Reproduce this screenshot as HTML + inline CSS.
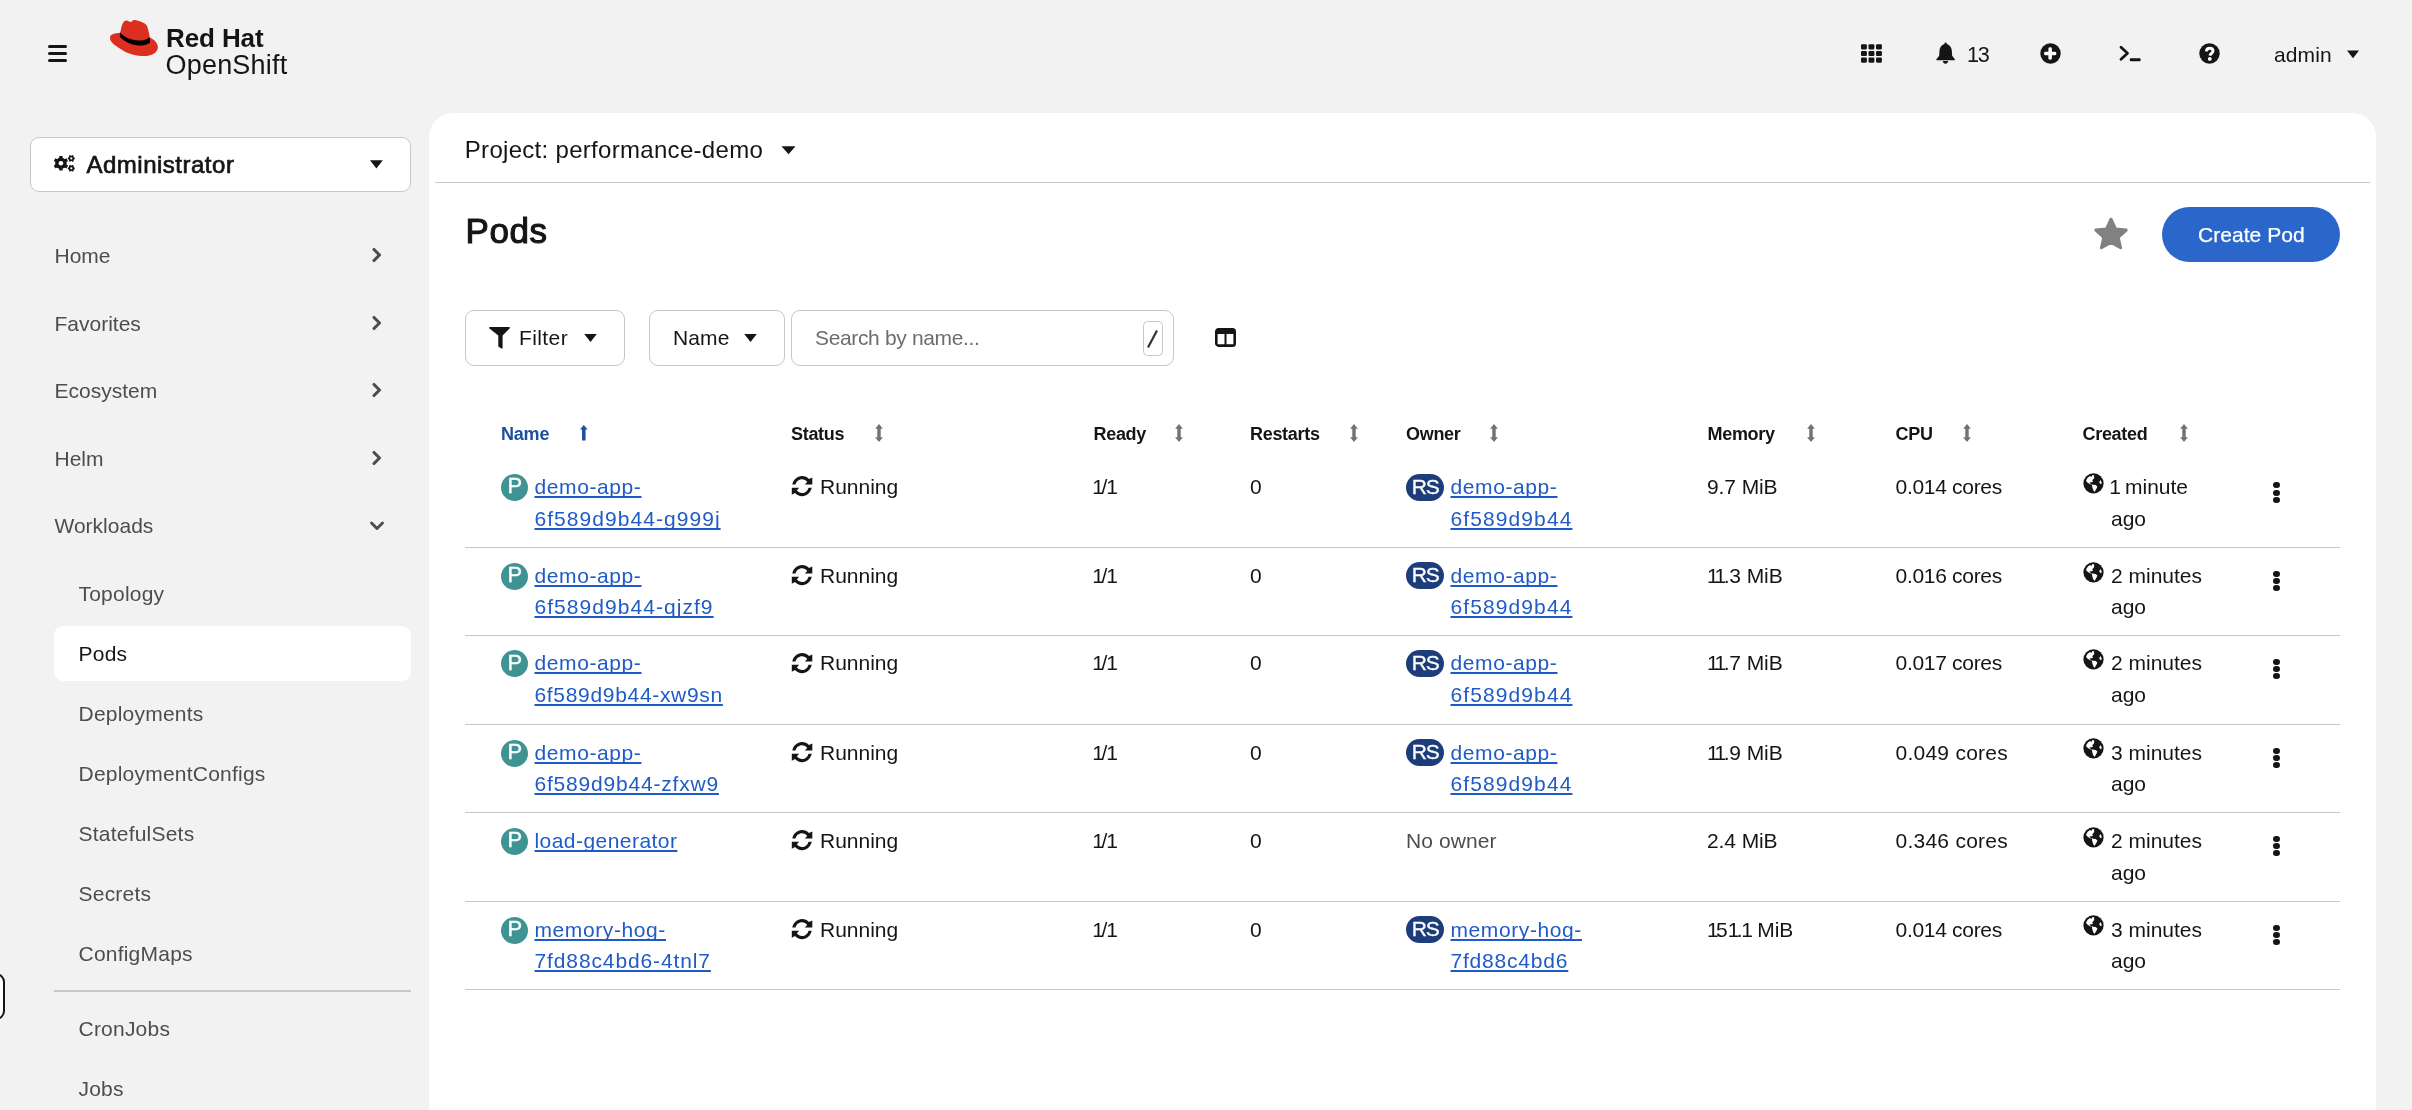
<!DOCTYPE html><html><head><meta charset="utf-8"><style>
html,body{margin:0;padding:0;width:2412px;height:1110px;overflow:hidden;background:#f2f2f2;font-family:"Liberation Sans",sans-serif;}
.t{position:absolute;white-space:nowrap;}
.r{position:absolute;box-sizing:border-box;}
a{color:inherit}
</style></head><body>
<div style="position:absolute;left:0;top:0;width:2412px;height:1110px;overflow:hidden;will-change:transform">
<div class="r" style="left:48.0px;top:45.3px;width:19.0px;height:3.0px;background:#151515;border-radius:1.5px"></div>
<div class="r" style="left:48.0px;top:52.0px;width:19.0px;height:3.0px;background:#151515;border-radius:1.5px"></div>
<div class="r" style="left:48.0px;top:58.7px;width:19.0px;height:3.0px;background:#151515;border-radius:1.5px"></div>
<svg class="r" style="left:105px;top:15px" width="60" height="45" viewBox="0 0 60 45">
<path style="fill:#dc2f1f" d="M15.8,15.4 C16.5,11 17.5,7 20.3,5.7 C22.5,5 24.5,7.2 26.3,6.9 C27.5,5.5 28.5,5 29.5,5.1 C34,5.8 40,8 41.8,10.5 C43,13 44,18 44.8,22.5 C49,24.5 53,28 52.9,32.5 C52.5,38 46,41.5 37,41 C28,40.5 20,37.5 14,33 C8,29 4.5,26 5.1,22.2 C5.5,19 10,18 14.8,18 Z"/>
<path fill="#000" d="M14.9,17.2 C18,21 24,24.5 31,25.2 C36,25.7 41,25.5 44.8,22.2 L45,27.5 C41,30.5 36,31 31.5,30.3 C24,29 18,25.5 14.9,21.8 Z"/>
</svg>
<div class="t" style="left:166.0px;top:25.49px;font-size:26px;line-height:26px;color:#151515;font-weight:700;letter-spacing:-0.1px;">Red Hat</div>
<div class="t" style="left:165.5px;top:51.84px;font-size:27px;line-height:27px;color:#151515;font-weight:400;letter-spacing:0.2px;">OpenShift</div>
<svg class="r" style="left:1858px;top:41px" width="28" height="25" viewBox="0 0 28 25"><rect x="3.0" y="3.200000000000003" width="5.9" height="5.2" rx="1.1" fill="#151515"/><rect x="3.0" y="9.899999999999999" width="5.9" height="5.2" rx="1.1" fill="#151515"/><rect x="3.0" y="16.5" width="5.9" height="5.2" rx="1.1" fill="#151515"/><rect x="10.5" y="3.200000000000003" width="5.9" height="5.2" rx="1.1" fill="#151515"/><rect x="10.5" y="9.899999999999999" width="5.9" height="5.2" rx="1.1" fill="#151515"/><rect x="10.5" y="16.5" width="5.9" height="5.2" rx="1.1" fill="#151515"/><rect x="18.0" y="3.200000000000003" width="5.9" height="5.2" rx="1.1" fill="#151515"/><rect x="18.0" y="9.899999999999999" width="5.9" height="5.2" rx="1.1" fill="#151515"/><rect x="18.0" y="16.5" width="5.9" height="5.2" rx="1.1" fill="#151515"/></svg>
<svg class="r" style="left:1928px;top:38px" width="35" height="30" viewBox="0 0 35 30"><path fill="#151515" d="M17.6,4.4 C18.4,4.4 18.8,5.1 18.8,5.9 C21.8,6.8 23.6,9.4 23.8,12.6 L24.1,17.6 C24.3,18.6 26.2,20.3 26.8,21 C27.1,21.5 26.8,22.3 26.1,22.3 L9.1,22.3 C8.4,22.3 8.1,21.5 8.5,21 C9.1,20.3 11,18.6 11.2,17.6 L11.5,12.6 C11.7,9.4 13.5,6.8 16.4,5.9 C16.4,5.1 16.8,4.4 17.6,4.4 Z M14.7,23.1 L20.3,23.1 C20,24.6 19,25.8 17.5,25.8 C16,25.8 15,24.6 14.7,23.1 Z"/></svg>
<div class="t" style="left:1967.0px;top:44.12px;font-size:21.6px;line-height:21.6px;color:#151515;font-weight:400;letter-spacing:-1.2px;">13</div>
<svg class="r" style="left:2040px;top:43px" width="21" height="21" viewBox="0 0 21 21"><circle cx="10.5" cy="10.5" r="10.2" fill="#151515"/><rect x="8.4" y="4.3" width="3.5" height="12.4" rx="1.4" fill="#fff"/><rect x="4.1" y="8.8" width="12.2" height="3.5" rx="1.4" fill="#fff"/></svg>
<svg class="r" style="left:2118px;top:44px" width="26" height="20" viewBox="0 0 26 20"><path d="M3,3.2 L9.5,9.2 L3,15.2" fill="none" stroke="#151515" stroke-width="2.8" stroke-linecap="round" stroke-linejoin="round"/><rect x="11.8" y="14.3" width="10.8" height="3" rx="1" fill="#151515"/></svg>
<svg class="r" style="left:2199px;top:43px" width="21" height="21" viewBox="0 0 21 21"><circle cx="10.5" cy="10.5" r="10.2" fill="#151515"/><path d="M7.3,8.3 C7.5,6.4 8.9,5.3 10.7,5.3 C12.7,5.3 14,6.5 14,8.1 C14,10.1 11.4,10.5 10.9,12.6" fill="none" stroke="#fff" stroke-width="2.9" stroke-linecap="butt" stroke-linejoin="round"/><circle cx="10.8" cy="15.9" r="1.9" fill="#fff"/></svg>
<div class="t" style="left:2274.0px;top:44.22px;font-size:21px;line-height:21px;color:#151515;font-weight:400;letter-spacing:0.1px;">admin</div>
<svg class="r" style="left:2346px;top:50px" width="14" height="9" viewBox="0 0 14 9"><path d="M1,0.5 L13,0.5 L7,8.3 Z" fill="#151515"/></svg>
<div class="r" style="left:30.0px;top:137.0px;width:381.0px;height:55.0px;background:#fff;border:1.5px solid #c7c7c7;border-radius:9px"></div>
<svg class="r" style="left:50px;top:150px" width="30" height="26" viewBox="0 0 30 26"><circle cx="10.9" cy="13.3" r="5.7" fill="#151515"/><rect x="9.200000000000001" y="6.000000000000001" width="3.4" height="7.3" rx="0.5" fill="#151515" transform="rotate(0 10.9 13.3)"/><rect x="9.200000000000001" y="6.000000000000001" width="3.4" height="7.3" rx="0.5" fill="#151515" transform="rotate(60 10.9 13.3)"/><rect x="9.200000000000001" y="6.000000000000001" width="3.4" height="7.3" rx="0.5" fill="#151515" transform="rotate(120 10.9 13.3)"/><rect x="9.200000000000001" y="6.000000000000001" width="3.4" height="7.3" rx="0.5" fill="#151515" transform="rotate(180 10.9 13.3)"/><rect x="9.200000000000001" y="6.000000000000001" width="3.4" height="7.3" rx="0.5" fill="#151515" transform="rotate(240 10.9 13.3)"/><rect x="9.200000000000001" y="6.000000000000001" width="3.4" height="7.3" rx="0.5" fill="#151515" transform="rotate(300 10.9 13.3)"/><circle cx="10.9" cy="13.3" r="2.3" fill="#fff"/><circle cx="21.3" cy="8.4" r="2.7" fill="#151515"/><rect x="20.400000000000002" y="4.9" width="1.8" height="3.5" rx="0.5" fill="#151515" transform="rotate(30 21.3 8.4)"/><rect x="20.400000000000002" y="4.9" width="1.8" height="3.5" rx="0.5" fill="#151515" transform="rotate(90 21.3 8.4)"/><rect x="20.400000000000002" y="4.9" width="1.8" height="3.5" rx="0.5" fill="#151515" transform="rotate(150 21.3 8.4)"/><rect x="20.400000000000002" y="4.9" width="1.8" height="3.5" rx="0.5" fill="#151515" transform="rotate(210 21.3 8.4)"/><rect x="20.400000000000002" y="4.9" width="1.8" height="3.5" rx="0.5" fill="#151515" transform="rotate(270 21.3 8.4)"/><rect x="20.400000000000002" y="4.9" width="1.8" height="3.5" rx="0.5" fill="#151515" transform="rotate(330 21.3 8.4)"/><circle cx="21.3" cy="8.4" r="1.1" fill="#fff"/><circle cx="21.3" cy="18.3" r="2.7" fill="#151515"/><rect x="20.400000000000002" y="14.8" width="1.8" height="3.5" rx="0.5" fill="#151515" transform="rotate(30 21.3 18.3)"/><rect x="20.400000000000002" y="14.8" width="1.8" height="3.5" rx="0.5" fill="#151515" transform="rotate(90 21.3 18.3)"/><rect x="20.400000000000002" y="14.8" width="1.8" height="3.5" rx="0.5" fill="#151515" transform="rotate(150 21.3 18.3)"/><rect x="20.400000000000002" y="14.8" width="1.8" height="3.5" rx="0.5" fill="#151515" transform="rotate(210 21.3 18.3)"/><rect x="20.400000000000002" y="14.8" width="1.8" height="3.5" rx="0.5" fill="#151515" transform="rotate(270 21.3 18.3)"/><rect x="20.400000000000002" y="14.8" width="1.8" height="3.5" rx="0.5" fill="#151515" transform="rotate(330 21.3 18.3)"/><circle cx="21.3" cy="18.3" r="1.1" fill="#fff"/></svg>
<div class="t" style="left:86.5px;top:152.68px;font-size:24px;line-height:24px;color:#151515;font-weight:400;letter-spacing:0.5px;-webkit-text-stroke:0.7px #151515">Administrator</div>
<svg class="r" style="left:369px;top:159px" width="15" height="11" viewBox="0 0 15 11"><path d="M1,1.2 L13.8,1.2 L7.4,9.5 Z" fill="#151515"/></svg>
<div class="t" style="left:54.5px;top:245.32px;font-size:21px;line-height:21px;color:#4d4d4d;font-weight:400;letter-spacing:0px;">Home</div>
<svg class="r" style="left:370.5px;top:247.00000000000003px" width="12" height="16" viewBox="0 0 12 16"><path d="M3,2.5 L8.5,8 L3,13.5" fill="none" stroke="#4d4d4d" stroke-width="3.1" stroke-linecap="round" stroke-linejoin="round"/></svg>
<div class="t" style="left:54.5px;top:313.42px;font-size:21px;line-height:21px;color:#4d4d4d;font-weight:400;letter-spacing:0px;">Favorites</div>
<svg class="r" style="left:370.5px;top:315.09999999999997px" width="12" height="16" viewBox="0 0 12 16"><path d="M3,2.5 L8.5,8 L3,13.5" fill="none" stroke="#4d4d4d" stroke-width="3.1" stroke-linecap="round" stroke-linejoin="round"/></svg>
<div class="t" style="left:54.5px;top:380.42px;font-size:21px;line-height:21px;color:#4d4d4d;font-weight:400;letter-spacing:0px;">Ecosystem</div>
<svg class="r" style="left:370.5px;top:382.09999999999997px" width="12" height="16" viewBox="0 0 12 16"><path d="M3,2.5 L8.5,8 L3,13.5" fill="none" stroke="#4d4d4d" stroke-width="3.1" stroke-linecap="round" stroke-linejoin="round"/></svg>
<div class="t" style="left:54.5px;top:447.92px;font-size:21px;line-height:21px;color:#4d4d4d;font-weight:400;letter-spacing:0px;">Helm</div>
<svg class="r" style="left:370.5px;top:449.59999999999997px" width="12" height="16" viewBox="0 0 12 16"><path d="M3,2.5 L8.5,8 L3,13.5" fill="none" stroke="#4d4d4d" stroke-width="3.1" stroke-linecap="round" stroke-linejoin="round"/></svg>
<div class="t" style="left:54.5px;top:514.82px;font-size:21px;line-height:21px;color:#4d4d4d;font-weight:400;letter-spacing:0px;">Workloads</div>
<svg class="r" style="left:368.5px;top:519.8px" width="16" height="12" viewBox="0 0 16 12"><path d="M2.5,3 L8,8.5 L13.5,3" fill="none" stroke="#4d4d4d" stroke-width="2.9" stroke-linecap="round" stroke-linejoin="round"/></svg>
<div class="r" style="left:54.0px;top:626.0px;width:357.0px;height:55.0px;background:#fff;border-radius:9px"></div>
<div class="t" style="left:78.5px;top:582.62px;font-size:21px;line-height:21px;color:#4d4d4d;font-weight:400;letter-spacing:0.22px;">Topology</div>
<div class="t" style="left:78.5px;top:642.72px;font-size:21px;line-height:21px;color:#151515;font-weight:400;letter-spacing:0.22px;">Pods</div>
<div class="t" style="left:78.5px;top:703.22px;font-size:21px;line-height:21px;color:#4d4d4d;font-weight:400;letter-spacing:0.22px;">Deployments</div>
<div class="t" style="left:78.5px;top:763.02px;font-size:21px;line-height:21px;color:#4d4d4d;font-weight:400;letter-spacing:0.22px;">DeploymentConfigs</div>
<div class="t" style="left:78.5px;top:822.82px;font-size:21px;line-height:21px;color:#4d4d4d;font-weight:400;letter-spacing:0.22px;">StatefulSets</div>
<div class="t" style="left:78.5px;top:883.02px;font-size:21px;line-height:21px;color:#4d4d4d;font-weight:400;letter-spacing:0.22px;">Secrets</div>
<div class="t" style="left:78.5px;top:943.22px;font-size:21px;line-height:21px;color:#4d4d4d;font-weight:400;letter-spacing:0.22px;">ConfigMaps</div>
<div class="t" style="left:78.5px;top:1017.82px;font-size:21px;line-height:21px;color:#4d4d4d;font-weight:400;letter-spacing:0.22px;">CronJobs</div>
<div class="t" style="left:78.5px;top:1077.92px;font-size:21px;line-height:21px;color:#4d4d4d;font-weight:400;letter-spacing:0.22px;">Jobs</div>
<div class="r" style="left:54.0px;top:990.0px;width:357.0px;height:2.0px;background:#c7c7c7"></div>
<div class="r" style="left:-30.0px;top:972.5px;width:34.5px;height:47.5px;background:#fff;border:2px solid #151515;border-radius:9px"></div>
<div class="r" style="left:429.0px;top:113.0px;width:1947.0px;height:1100.0px;background:#fff;border-radius:24px 24px 0 0"></div>
<div class="t" style="left:464.8px;top:137.58px;font-size:24px;line-height:24px;color:#151515;font-weight:400;letter-spacing:0.3px;">Project: performance-demo</div>
<svg class="r" style="left:780px;top:145px" width="17" height="11" viewBox="0 0 17 11"><path d="M1.5,1.2 L15.5,1.2 L8.5,9.2 Z" fill="#151515"/></svg>
<div class="r" style="left:435.0px;top:182.0px;width:1935.0px;height:1.0px;background:#c8c8c8"></div>
<div class="t" style="left:465.5px;top:212.97px;font-size:35px;line-height:35px;color:#151515;font-weight:400;letter-spacing:0.6px;-webkit-text-stroke:1.1px #151515">Pods</div>
<svg class="r" style="left:2092px;top:216px" width="38" height="36" viewBox="0 0 38 36"><path fill="#818181" d="M19,3.2 L23.5,12.9 L34.2,14.1 L26.2,21.3 L28.6,31.8 L19,26.4 L9.4,31.8 L11.8,21.3 L3.8,14.1 L14.5,12.9 Z" stroke="#818181" stroke-width="3" stroke-linejoin="round"/></svg>
<div class="r" style="left:2162.0px;top:207.0px;width:178.0px;height:55.0px;background:#2b66ca;border-radius:28px"></div>
<div class="t" style="left:2198.0px;top:224.02px;font-size:21px;line-height:21px;color:#fff;font-weight:400;letter-spacing:0.05px;-webkit-text-stroke:0.25px #fff">Create Pod</div>
<div class="r" style="left:465.0px;top:310.0px;width:160.0px;height:56.0px;background:#fff;border:1.5px solid #c7c7c7;border-radius:9px"></div>
<svg class="r" style="left:487px;top:326px" width="25" height="23" viewBox="0 0 25 23"><path fill="#151515" d="M2.2,2.2 C2,1.6 2.4,1 3,1 L22.2,1 C22.8,1 23.1,1.6 22.8,2.2 L15.6,9.6 L15.6,22 C15.6,22.6 15,22.9 14.5,22.6 L11.9,20.9 C11.5,20.7 11.3,20.3 11.3,19.9 L11.3,9.6 Z"/></svg>
<div class="t" style="left:519.0px;top:327.22px;font-size:21px;line-height:21px;color:#151515;font-weight:400;letter-spacing:0.4px;">Filter</div>
<svg class="r" style="left:583px;top:333px" width="15" height="10" viewBox="0 0 15 10"><path d="M1.2,1 L13.8,1 L7.5,9 Z" fill="#151515"/></svg>
<div class="r" style="left:649.0px;top:310.0px;width:136.0px;height:56.0px;background:#fff;border:1.5px solid #c7c7c7;border-radius:9px"></div>
<div class="t" style="left:673.0px;top:327.22px;font-size:21px;line-height:21px;color:#151515;font-weight:400;letter-spacing:0.1px;">Name</div>
<svg class="r" style="left:742.5px;top:333px" width="15" height="10" viewBox="0 0 15 10"><path d="M1.2,1 L13.8,1 L7.5,9 Z" fill="#151515"/></svg>
<div class="r" style="left:791.0px;top:310.0px;width:383.0px;height:56.0px;background:#fff;border:1.5px solid #c7c7c7;border-radius:9px"></div>
<div class="t" style="left:815.0px;top:327.22px;font-size:21px;line-height:21px;color:#6a6e73;font-weight:400;letter-spacing:-0.35px;">Search by name...</div>
<div class="r" style="left:1143.0px;top:321.0px;width:20.0px;height:35.0px;background:#fff;border:1.2px solid #c7c7c7;border-radius:4.5px"></div>
<svg class="r" style="left:1143px;top:321px" width="20" height="35" viewBox="0 0 20 35"><path d="M5,26.5 L14,9.5" stroke="#333" stroke-width="2.2"/></svg>
<svg class="r" style="left:1214px;top:327px" width="23" height="21" viewBox="0 0 23 21"><rect x="2.3" y="2.3" width="18.4" height="16.3" rx="2.2" fill="none" stroke="#151515" stroke-width="2.6"/><rect x="2" y="2" width="19" height="5" fill="#151515"/><rect x="10.5" y="5" width="2" height="13" fill="#151515"/></svg>
<div class="t" style="left:501.0px;top:425.16px;font-size:18px;line-height:18px;color:#1f4f9a;font-weight:700;letter-spacing:-0.2px;">Name</div>
<svg class="r" style="left:578px;top:423px" width="12" height="20" viewBox="0 0 12 20"><path fill="#1f4f9a" d="M5.8,2 L9.6,6.6 L7.55,6.6 L7.55,17.6 L4.05,17.6 L4.05,6.6 L2,6.6 Z"/></svg>
<div class="t" style="left:791.0px;top:425.16px;font-size:18px;line-height:18px;color:#151515;font-weight:700;letter-spacing:-0.3px;">Status</div>
<svg class="r" style="left:874px;top:423px" width="11" height="20" viewBox="0 0 11 20"><path fill="#727272" d="M5,1 L8.9,5.8 L6.7,5.8 L6.7,14.2 L8.9,14.2 L5,19 L1.1,14.2 L3.3,14.2 L3.3,5.8 L1.1,5.8 Z"/></svg>
<div class="t" style="left:1093.5px;top:425.16px;font-size:18px;line-height:18px;color:#151515;font-weight:700;letter-spacing:-0.3px;">Ready</div>
<svg class="r" style="left:1173.5px;top:423px" width="11" height="20" viewBox="0 0 11 20"><path fill="#727272" d="M5,1 L8.9,5.8 L6.7,5.8 L6.7,14.2 L8.9,14.2 L5,19 L1.1,14.2 L3.3,14.2 L3.3,5.8 L1.1,5.8 Z"/></svg>
<div class="t" style="left:1250.0px;top:425.16px;font-size:18px;line-height:18px;color:#151515;font-weight:700;letter-spacing:-0.3px;">Restarts</div>
<svg class="r" style="left:1348.5px;top:423px" width="11" height="20" viewBox="0 0 11 20"><path fill="#727272" d="M5,1 L8.9,5.8 L6.7,5.8 L6.7,14.2 L8.9,14.2 L5,19 L1.1,14.2 L3.3,14.2 L3.3,5.8 L1.1,5.8 Z"/></svg>
<div class="t" style="left:1406.0px;top:425.16px;font-size:18px;line-height:18px;color:#151515;font-weight:700;letter-spacing:-0.3px;">Owner</div>
<svg class="r" style="left:1488.5px;top:423px" width="11" height="20" viewBox="0 0 11 20"><path fill="#727272" d="M5,1 L8.9,5.8 L6.7,5.8 L6.7,14.2 L8.9,14.2 L5,19 L1.1,14.2 L3.3,14.2 L3.3,5.8 L1.1,5.8 Z"/></svg>
<div class="t" style="left:1707.5px;top:425.16px;font-size:18px;line-height:18px;color:#151515;font-weight:700;letter-spacing:-0.3px;">Memory</div>
<svg class="r" style="left:1805.7px;top:423px" width="11" height="20" viewBox="0 0 11 20"><path fill="#727272" d="M5,1 L8.9,5.8 L6.7,5.8 L6.7,14.2 L8.9,14.2 L5,19 L1.1,14.2 L3.3,14.2 L3.3,5.8 L1.1,5.8 Z"/></svg>
<div class="t" style="left:1895.5px;top:425.16px;font-size:18px;line-height:18px;color:#151515;font-weight:700;letter-spacing:-0.3px;">CPU</div>
<svg class="r" style="left:1961.8px;top:423px" width="11" height="20" viewBox="0 0 11 20"><path fill="#727272" d="M5,1 L8.9,5.8 L6.7,5.8 L6.7,14.2 L8.9,14.2 L5,19 L1.1,14.2 L3.3,14.2 L3.3,5.8 L1.1,5.8 Z"/></svg>
<div class="t" style="left:2082.5px;top:425.16px;font-size:18px;line-height:18px;color:#151515;font-weight:700;letter-spacing:-0.3px;">Created</div>
<svg class="r" style="left:2178.5px;top:423px" width="11" height="20" viewBox="0 0 11 20"><path fill="#727272" d="M5,1 L8.9,5.8 L6.7,5.8 L6.7,14.2 L8.9,14.2 L5,19 L1.1,14.2 L3.3,14.2 L3.3,5.8 L1.1,5.8 Z"/></svg>
<svg class="r" style="left:500px;top:473.1px" width="29" height="29" viewBox="0 0 29 29"><circle cx="14.5" cy="14.5" r="13.5" fill="#409393"/></svg>
<div class="t" style="left:507.6px;top:475.38px;font-size:22px;line-height:22px;color:#fff;font-weight:400;letter-spacing:0px;-webkit-text-stroke:0.35px #fff">P</div>
<div class="t" style="left:534.5px;top:476.12px;font-size:21px;line-height:21px;color:#1f5bc6;font-weight:400;letter-spacing:0.6px;text-decoration:underline;text-decoration-thickness:2px;text-underline-offset:2.1px;text-decoration-skip-ink:none">demo-app-</div>
<div class="t" style="left:534.5px;top:507.92px;font-size:21px;line-height:21px;color:#1f5bc6;font-weight:400;letter-spacing:1.05px;text-decoration:underline;text-decoration-thickness:2px;text-underline-offset:2.1px;text-decoration-skip-ink:none">6f589d9b44-g999j</div>
<svg class="r" style="left:790.5px;top:475.3px" width="22" height="22" viewBox="0 0 22 22"><g fill="#151515">
<path d="M1.3,9.5 C2.2,4.6 6.2,1 11,1 C13.8,1 16.3,2.2 18,4.1 L21.3,2.4 L21.3,9.4 L13.8,9.4 L16.2,6.9 C14.9,5.3 13,4.2 11,4.2 C7.8,4.2 5.2,6.5 4.5,9.5 Z"/>
<path d="M20.7,12.7 C19.8,17.5 15.8,21.2 11,21.2 C8.3,21.2 5.7,20 4,18.1 L0.8,19.8 L0.8,12.7 L8.2,12.7 L5.9,15.3 C7.2,17 9,18 11,18 C14.2,18 16.8,15.8 17.5,12.7 Z"/>
</g></svg>
<div class="t" style="left:820.0px;top:476.12px;font-size:21px;line-height:21px;color:#151515;font-weight:400;letter-spacing:0px;">Running</div>
<div class="t" style="left:1092.3px;top:476.12px;font-size:21px;line-height:21px;color:#151515;font-weight:400;letter-spacing:0px;"><span style="letter-spacing:-2.4px">1</span>/<span style="margin-left:-1.2px;letter-spacing:-1.2px">1</span></div>
<div class="t" style="left:1250.0px;top:476.12px;font-size:21px;line-height:21px;color:#151515;font-weight:400;letter-spacing:0px;">0</div>
<div class="r" style="left:1406.0px;top:473.9px;width:38.0px;height:27.0px;background:#1c3d7a;border-radius:14px"></div>
<div class="t" style="left:1411.8px;top:475.92px;font-size:21px;line-height:21px;color:#fff;font-weight:400;letter-spacing:-1.1px;-webkit-text-stroke:0.3px #fff">RS</div>
<div class="t" style="left:1450.5px;top:476.12px;font-size:21px;line-height:21px;color:#1f5bc6;font-weight:400;letter-spacing:0.6px;text-decoration:underline;text-decoration-thickness:2px;text-underline-offset:2.1px;text-decoration-skip-ink:none">demo-app-</div>
<div class="t" style="left:1450.5px;top:507.92px;font-size:21px;line-height:21px;color:#1f5bc6;font-weight:400;letter-spacing:1.1px;text-decoration:underline;text-decoration-thickness:2px;text-underline-offset:2.1px;text-decoration-skip-ink:none">6f589d9b44</div>
<div class="t" style="left:1707.0px;top:476.12px;font-size:21px;line-height:21px;color:#151515;font-weight:400;letter-spacing:-0.1px;">9.7 MiB</div>
<div class="t" style="left:1895.5px;top:476.12px;font-size:21px;line-height:21px;color:#151515;font-weight:400;letter-spacing:-0.3px;">0.014 cores</div>
<svg class="r" style="left:2080px;top:470.0px" width="28" height="28" viewBox="0 0 28 28"><circle cx="13.5" cy="13.4" r="10.1" fill="#151515"/>
<path fill="#fff" d="M6,10.8 C6.8,8.6 8.5,6.8 10.2,6.0 L11.2,6.9 L12.6,5.0 C13.3,5.0 14,5.4 14.2,5.9 L14.1,8.3 L12.3,10.2 L12.9,11.9 L11.1,12.3 L9.6,12.5 L9.8,13.3 L11.8,14.4 L11.2,14.8 L8.3,13.2 C7.2,12.6 6.4,11.8 6,10.8 Z"/>
<path fill="#fff" d="M11.9,14.6 L15.6,15.0 L17.4,16.4 L16.4,18.7 L14.6,21.9 L13.1,19.9 L12.1,16.6 Z"/>
<path fill="#fff" d="M19.2,12.1 L20.7,10.1 L21.4,12.1 L21.9,13.6 L20.2,14.1 Z"/></svg>
<div class="t" style="left:2111.0px;top:476.12px;font-size:21px;line-height:21px;color:#151515;font-weight:400;letter-spacing:0px;"><span style="margin-left:-1.75px;letter-spacing:-1.75px">1</span> minute</div>
<div class="t" style="left:2111.0px;top:507.92px;font-size:21px;line-height:21px;color:#151515;font-weight:400;letter-spacing:0px;">ago</div>
<div class="r" style="left:2273.4px;top:482.2px;width:6.4px;height:6.2px;background:#151515;border-radius:50%"></div>
<div class="r" style="left:2273.4px;top:489.5px;width:6.4px;height:6.2px;background:#151515;border-radius:50%"></div>
<div class="r" style="left:2273.4px;top:496.6px;width:6.4px;height:6.2px;background:#151515;border-radius:50%"></div>
<svg class="r" style="left:500px;top:561.6px" width="29" height="29" viewBox="0 0 29 29"><circle cx="14.5" cy="14.5" r="13.5" fill="#409393"/></svg>
<div class="t" style="left:507.6px;top:563.88px;font-size:22px;line-height:22px;color:#fff;font-weight:400;letter-spacing:0px;-webkit-text-stroke:0.35px #fff">P</div>
<div class="t" style="left:534.5px;top:564.62px;font-size:21px;line-height:21px;color:#1f5bc6;font-weight:400;letter-spacing:0.6px;text-decoration:underline;text-decoration-thickness:2px;text-underline-offset:2.1px;text-decoration-skip-ink:none">demo-app-</div>
<div class="t" style="left:534.5px;top:596.42px;font-size:21px;line-height:21px;color:#1f5bc6;font-weight:400;letter-spacing:1.05px;text-decoration:underline;text-decoration-thickness:2px;text-underline-offset:2.1px;text-decoration-skip-ink:none">6f589d9b44-qjzf9</div>
<svg class="r" style="left:790.5px;top:563.8000000000001px" width="22" height="22" viewBox="0 0 22 22"><g fill="#151515">
<path d="M1.3,9.5 C2.2,4.6 6.2,1 11,1 C13.8,1 16.3,2.2 18,4.1 L21.3,2.4 L21.3,9.4 L13.8,9.4 L16.2,6.9 C14.9,5.3 13,4.2 11,4.2 C7.8,4.2 5.2,6.5 4.5,9.5 Z"/>
<path d="M20.7,12.7 C19.8,17.5 15.8,21.2 11,21.2 C8.3,21.2 5.7,20 4,18.1 L0.8,19.8 L0.8,12.7 L8.2,12.7 L5.9,15.3 C7.2,17 9,18 11,18 C14.2,18 16.8,15.8 17.5,12.7 Z"/>
</g></svg>
<div class="t" style="left:820.0px;top:564.62px;font-size:21px;line-height:21px;color:#151515;font-weight:400;letter-spacing:0px;">Running</div>
<div class="t" style="left:1092.3px;top:564.62px;font-size:21px;line-height:21px;color:#151515;font-weight:400;letter-spacing:0px;"><span style="letter-spacing:-2.4px">1</span>/<span style="margin-left:-1.2px;letter-spacing:-1.2px">1</span></div>
<div class="t" style="left:1250.0px;top:564.62px;font-size:21px;line-height:21px;color:#151515;font-weight:400;letter-spacing:0px;">0</div>
<div class="r" style="left:1406.0px;top:562.4px;width:38.0px;height:27.0px;background:#1c3d7a;border-radius:14px"></div>
<div class="t" style="left:1411.8px;top:564.42px;font-size:21px;line-height:21px;color:#fff;font-weight:400;letter-spacing:-1.1px;-webkit-text-stroke:0.3px #fff">RS</div>
<div class="t" style="left:1450.5px;top:564.62px;font-size:21px;line-height:21px;color:#1f5bc6;font-weight:400;letter-spacing:0.6px;text-decoration:underline;text-decoration-thickness:2px;text-underline-offset:2.1px;text-decoration-skip-ink:none">demo-app-</div>
<div class="t" style="left:1450.5px;top:596.42px;font-size:21px;line-height:21px;color:#1f5bc6;font-weight:400;letter-spacing:1.1px;text-decoration:underline;text-decoration-thickness:2px;text-underline-offset:2.1px;text-decoration-skip-ink:none">6f589d9b44</div>
<div class="t" style="left:1707.0px;top:564.62px;font-size:21px;line-height:21px;color:#151515;font-weight:400;letter-spacing:-0.1px;"><span style="letter-spacing:-2.6px">1</span><span style="letter-spacing:-2.6px">1</span>.3 MiB</div>
<div class="t" style="left:1895.5px;top:564.62px;font-size:21px;line-height:21px;color:#151515;font-weight:400;letter-spacing:-0.3px;">0.016 cores</div>
<svg class="r" style="left:2080px;top:558.5px" width="28" height="28" viewBox="0 0 28 28"><circle cx="13.5" cy="13.4" r="10.1" fill="#151515"/>
<path fill="#fff" d="M6,10.8 C6.8,8.6 8.5,6.8 10.2,6.0 L11.2,6.9 L12.6,5.0 C13.3,5.0 14,5.4 14.2,5.9 L14.1,8.3 L12.3,10.2 L12.9,11.9 L11.1,12.3 L9.6,12.5 L9.8,13.3 L11.8,14.4 L11.2,14.8 L8.3,13.2 C7.2,12.6 6.4,11.8 6,10.8 Z"/>
<path fill="#fff" d="M11.9,14.6 L15.6,15.0 L17.4,16.4 L16.4,18.7 L14.6,21.9 L13.1,19.9 L12.1,16.6 Z"/>
<path fill="#fff" d="M19.2,12.1 L20.7,10.1 L21.4,12.1 L21.9,13.6 L20.2,14.1 Z"/></svg>
<div class="t" style="left:2111.0px;top:564.62px;font-size:21px;line-height:21px;color:#151515;font-weight:400;letter-spacing:0px;">2 minutes</div>
<div class="t" style="left:2111.0px;top:596.42px;font-size:21px;line-height:21px;color:#151515;font-weight:400;letter-spacing:0px;">ago</div>
<div class="r" style="left:2273.4px;top:570.7px;width:6.4px;height:6.2px;background:#151515;border-radius:50%"></div>
<div class="r" style="left:2273.4px;top:578.0px;width:6.4px;height:6.2px;background:#151515;border-radius:50%"></div>
<div class="r" style="left:2273.4px;top:585.1px;width:6.4px;height:6.2px;background:#151515;border-radius:50%"></div>
<svg class="r" style="left:500px;top:649.4px" width="29" height="29" viewBox="0 0 29 29"><circle cx="14.5" cy="14.5" r="13.5" fill="#409393"/></svg>
<div class="t" style="left:507.6px;top:651.68px;font-size:22px;line-height:22px;color:#fff;font-weight:400;letter-spacing:0px;-webkit-text-stroke:0.35px #fff">P</div>
<div class="t" style="left:534.5px;top:652.42px;font-size:21px;line-height:21px;color:#1f5bc6;font-weight:400;letter-spacing:0.6px;text-decoration:underline;text-decoration-thickness:2px;text-underline-offset:2.1px;text-decoration-skip-ink:none">demo-app-</div>
<div class="t" style="left:534.5px;top:684.22px;font-size:21px;line-height:21px;color:#1f5bc6;font-weight:400;letter-spacing:0.68px;text-decoration:underline;text-decoration-thickness:2px;text-underline-offset:2.1px;text-decoration-skip-ink:none">6f589d9b44-xw9sn</div>
<svg class="r" style="left:790.5px;top:651.6px" width="22" height="22" viewBox="0 0 22 22"><g fill="#151515">
<path d="M1.3,9.5 C2.2,4.6 6.2,1 11,1 C13.8,1 16.3,2.2 18,4.1 L21.3,2.4 L21.3,9.4 L13.8,9.4 L16.2,6.9 C14.9,5.3 13,4.2 11,4.2 C7.8,4.2 5.2,6.5 4.5,9.5 Z"/>
<path d="M20.7,12.7 C19.8,17.5 15.8,21.2 11,21.2 C8.3,21.2 5.7,20 4,18.1 L0.8,19.8 L0.8,12.7 L8.2,12.7 L5.9,15.3 C7.2,17 9,18 11,18 C14.2,18 16.8,15.8 17.5,12.7 Z"/>
</g></svg>
<div class="t" style="left:820.0px;top:652.42px;font-size:21px;line-height:21px;color:#151515;font-weight:400;letter-spacing:0px;">Running</div>
<div class="t" style="left:1092.3px;top:652.42px;font-size:21px;line-height:21px;color:#151515;font-weight:400;letter-spacing:0px;"><span style="letter-spacing:-2.4px">1</span>/<span style="margin-left:-1.2px;letter-spacing:-1.2px">1</span></div>
<div class="t" style="left:1250.0px;top:652.42px;font-size:21px;line-height:21px;color:#151515;font-weight:400;letter-spacing:0px;">0</div>
<div class="r" style="left:1406.0px;top:650.2px;width:38.0px;height:27.0px;background:#1c3d7a;border-radius:14px"></div>
<div class="t" style="left:1411.8px;top:652.22px;font-size:21px;line-height:21px;color:#fff;font-weight:400;letter-spacing:-1.1px;-webkit-text-stroke:0.3px #fff">RS</div>
<div class="t" style="left:1450.5px;top:652.42px;font-size:21px;line-height:21px;color:#1f5bc6;font-weight:400;letter-spacing:0.6px;text-decoration:underline;text-decoration-thickness:2px;text-underline-offset:2.1px;text-decoration-skip-ink:none">demo-app-</div>
<div class="t" style="left:1450.5px;top:684.22px;font-size:21px;line-height:21px;color:#1f5bc6;font-weight:400;letter-spacing:1.1px;text-decoration:underline;text-decoration-thickness:2px;text-underline-offset:2.1px;text-decoration-skip-ink:none">6f589d9b44</div>
<div class="t" style="left:1707.0px;top:652.42px;font-size:21px;line-height:21px;color:#151515;font-weight:400;letter-spacing:-0.1px;"><span style="letter-spacing:-2.6px">1</span><span style="letter-spacing:-2.6px">1</span>.7 MiB</div>
<div class="t" style="left:1895.5px;top:652.42px;font-size:21px;line-height:21px;color:#151515;font-weight:400;letter-spacing:-0.3px;">0.017 cores</div>
<svg class="r" style="left:2080px;top:646.3px" width="28" height="28" viewBox="0 0 28 28"><circle cx="13.5" cy="13.4" r="10.1" fill="#151515"/>
<path fill="#fff" d="M6,10.8 C6.8,8.6 8.5,6.8 10.2,6.0 L11.2,6.9 L12.6,5.0 C13.3,5.0 14,5.4 14.2,5.9 L14.1,8.3 L12.3,10.2 L12.9,11.9 L11.1,12.3 L9.6,12.5 L9.8,13.3 L11.8,14.4 L11.2,14.8 L8.3,13.2 C7.2,12.6 6.4,11.8 6,10.8 Z"/>
<path fill="#fff" d="M11.9,14.6 L15.6,15.0 L17.4,16.4 L16.4,18.7 L14.6,21.9 L13.1,19.9 L12.1,16.6 Z"/>
<path fill="#fff" d="M19.2,12.1 L20.7,10.1 L21.4,12.1 L21.9,13.6 L20.2,14.1 Z"/></svg>
<div class="t" style="left:2111.0px;top:652.42px;font-size:21px;line-height:21px;color:#151515;font-weight:400;letter-spacing:0px;">2 minutes</div>
<div class="t" style="left:2111.0px;top:684.22px;font-size:21px;line-height:21px;color:#151515;font-weight:400;letter-spacing:0px;">ago</div>
<div class="r" style="left:2273.4px;top:658.5px;width:6.4px;height:6.2px;background:#151515;border-radius:50%"></div>
<div class="r" style="left:2273.4px;top:665.8px;width:6.4px;height:6.2px;background:#151515;border-radius:50%"></div>
<div class="r" style="left:2273.4px;top:672.9px;width:6.4px;height:6.2px;background:#151515;border-radius:50%"></div>
<svg class="r" style="left:500px;top:738.5px" width="29" height="29" viewBox="0 0 29 29"><circle cx="14.5" cy="14.5" r="13.5" fill="#409393"/></svg>
<div class="t" style="left:507.6px;top:740.78px;font-size:22px;line-height:22px;color:#fff;font-weight:400;letter-spacing:0px;-webkit-text-stroke:0.35px #fff">P</div>
<div class="t" style="left:534.5px;top:741.52px;font-size:21px;line-height:21px;color:#1f5bc6;font-weight:400;letter-spacing:0.6px;text-decoration:underline;text-decoration-thickness:2px;text-underline-offset:2.1px;text-decoration-skip-ink:none">demo-app-</div>
<div class="t" style="left:534.5px;top:773.32px;font-size:21px;line-height:21px;color:#1f5bc6;font-weight:400;letter-spacing:0.8px;text-decoration:underline;text-decoration-thickness:2px;text-underline-offset:2.1px;text-decoration-skip-ink:none">6f589d9b44-zfxw9</div>
<svg class="r" style="left:790.5px;top:740.7px" width="22" height="22" viewBox="0 0 22 22"><g fill="#151515">
<path d="M1.3,9.5 C2.2,4.6 6.2,1 11,1 C13.8,1 16.3,2.2 18,4.1 L21.3,2.4 L21.3,9.4 L13.8,9.4 L16.2,6.9 C14.9,5.3 13,4.2 11,4.2 C7.8,4.2 5.2,6.5 4.5,9.5 Z"/>
<path d="M20.7,12.7 C19.8,17.5 15.8,21.2 11,21.2 C8.3,21.2 5.7,20 4,18.1 L0.8,19.8 L0.8,12.7 L8.2,12.7 L5.9,15.3 C7.2,17 9,18 11,18 C14.2,18 16.8,15.8 17.5,12.7 Z"/>
</g></svg>
<div class="t" style="left:820.0px;top:741.52px;font-size:21px;line-height:21px;color:#151515;font-weight:400;letter-spacing:0px;">Running</div>
<div class="t" style="left:1092.3px;top:741.52px;font-size:21px;line-height:21px;color:#151515;font-weight:400;letter-spacing:0px;"><span style="letter-spacing:-2.4px">1</span>/<span style="margin-left:-1.2px;letter-spacing:-1.2px">1</span></div>
<div class="t" style="left:1250.0px;top:741.52px;font-size:21px;line-height:21px;color:#151515;font-weight:400;letter-spacing:0px;">0</div>
<div class="r" style="left:1406.0px;top:739.3px;width:38.0px;height:27.0px;background:#1c3d7a;border-radius:14px"></div>
<div class="t" style="left:1411.8px;top:741.32px;font-size:21px;line-height:21px;color:#fff;font-weight:400;letter-spacing:-1.1px;-webkit-text-stroke:0.3px #fff">RS</div>
<div class="t" style="left:1450.5px;top:741.52px;font-size:21px;line-height:21px;color:#1f5bc6;font-weight:400;letter-spacing:0.6px;text-decoration:underline;text-decoration-thickness:2px;text-underline-offset:2.1px;text-decoration-skip-ink:none">demo-app-</div>
<div class="t" style="left:1450.5px;top:773.32px;font-size:21px;line-height:21px;color:#1f5bc6;font-weight:400;letter-spacing:1.1px;text-decoration:underline;text-decoration-thickness:2px;text-underline-offset:2.1px;text-decoration-skip-ink:none">6f589d9b44</div>
<div class="t" style="left:1707.0px;top:741.52px;font-size:21px;line-height:21px;color:#151515;font-weight:400;letter-spacing:-0.1px;"><span style="letter-spacing:-2.6px">1</span><span style="letter-spacing:-2.6px">1</span>.9 MiB</div>
<div class="t" style="left:1895.5px;top:741.52px;font-size:21px;line-height:21px;color:#151515;font-weight:400;letter-spacing:0.25px;">0.049 cores</div>
<svg class="r" style="left:2080px;top:735.4px" width="28" height="28" viewBox="0 0 28 28"><circle cx="13.5" cy="13.4" r="10.1" fill="#151515"/>
<path fill="#fff" d="M6,10.8 C6.8,8.6 8.5,6.8 10.2,6.0 L11.2,6.9 L12.6,5.0 C13.3,5.0 14,5.4 14.2,5.9 L14.1,8.3 L12.3,10.2 L12.9,11.9 L11.1,12.3 L9.6,12.5 L9.8,13.3 L11.8,14.4 L11.2,14.8 L8.3,13.2 C7.2,12.6 6.4,11.8 6,10.8 Z"/>
<path fill="#fff" d="M11.9,14.6 L15.6,15.0 L17.4,16.4 L16.4,18.7 L14.6,21.9 L13.1,19.9 L12.1,16.6 Z"/>
<path fill="#fff" d="M19.2,12.1 L20.7,10.1 L21.4,12.1 L21.9,13.6 L20.2,14.1 Z"/></svg>
<div class="t" style="left:2111.0px;top:741.52px;font-size:21px;line-height:21px;color:#151515;font-weight:400;letter-spacing:0px;">3 minutes</div>
<div class="t" style="left:2111.0px;top:773.32px;font-size:21px;line-height:21px;color:#151515;font-weight:400;letter-spacing:0px;">ago</div>
<div class="r" style="left:2273.4px;top:747.6px;width:6.4px;height:6.2px;background:#151515;border-radius:50%"></div>
<div class="r" style="left:2273.4px;top:754.9px;width:6.4px;height:6.2px;background:#151515;border-radius:50%"></div>
<div class="r" style="left:2273.4px;top:762.0px;width:6.4px;height:6.2px;background:#151515;border-radius:50%"></div>
<svg class="r" style="left:500px;top:826.8px" width="29" height="29" viewBox="0 0 29 29"><circle cx="14.5" cy="14.5" r="13.5" fill="#409393"/></svg>
<div class="t" style="left:507.6px;top:829.08px;font-size:22px;line-height:22px;color:#fff;font-weight:400;letter-spacing:0px;-webkit-text-stroke:0.35px #fff">P</div>
<div class="t" style="left:534.5px;top:829.82px;font-size:21px;line-height:21px;color:#1f5bc6;font-weight:400;letter-spacing:0.45px;text-decoration:underline;text-decoration-thickness:2px;text-underline-offset:2.1px;text-decoration-skip-ink:none">load-generator</div>
<svg class="r" style="left:790.5px;top:829.0px" width="22" height="22" viewBox="0 0 22 22"><g fill="#151515">
<path d="M1.3,9.5 C2.2,4.6 6.2,1 11,1 C13.8,1 16.3,2.2 18,4.1 L21.3,2.4 L21.3,9.4 L13.8,9.4 L16.2,6.9 C14.9,5.3 13,4.2 11,4.2 C7.8,4.2 5.2,6.5 4.5,9.5 Z"/>
<path d="M20.7,12.7 C19.8,17.5 15.8,21.2 11,21.2 C8.3,21.2 5.7,20 4,18.1 L0.8,19.8 L0.8,12.7 L8.2,12.7 L5.9,15.3 C7.2,17 9,18 11,18 C14.2,18 16.8,15.8 17.5,12.7 Z"/>
</g></svg>
<div class="t" style="left:820.0px;top:829.82px;font-size:21px;line-height:21px;color:#151515;font-weight:400;letter-spacing:0px;">Running</div>
<div class="t" style="left:1092.3px;top:829.82px;font-size:21px;line-height:21px;color:#151515;font-weight:400;letter-spacing:0px;"><span style="letter-spacing:-2.4px">1</span>/<span style="margin-left:-1.2px;letter-spacing:-1.2px">1</span></div>
<div class="t" style="left:1250.0px;top:829.82px;font-size:21px;line-height:21px;color:#151515;font-weight:400;letter-spacing:0px;">0</div>
<div class="t" style="left:1406.0px;top:829.82px;font-size:21px;line-height:21px;color:#4d4d4d;font-weight:400;letter-spacing:0.1px;">No owner</div>
<div class="t" style="left:1707.0px;top:829.82px;font-size:21px;line-height:21px;color:#151515;font-weight:400;letter-spacing:-0.1px;">2.4 MiB</div>
<div class="t" style="left:1895.5px;top:829.82px;font-size:21px;line-height:21px;color:#151515;font-weight:400;letter-spacing:0.25px;">0.346 cores</div>
<svg class="r" style="left:2080px;top:823.6999999999999px" width="28" height="28" viewBox="0 0 28 28"><circle cx="13.5" cy="13.4" r="10.1" fill="#151515"/>
<path fill="#fff" d="M6,10.8 C6.8,8.6 8.5,6.8 10.2,6.0 L11.2,6.9 L12.6,5.0 C13.3,5.0 14,5.4 14.2,5.9 L14.1,8.3 L12.3,10.2 L12.9,11.9 L11.1,12.3 L9.6,12.5 L9.8,13.3 L11.8,14.4 L11.2,14.8 L8.3,13.2 C7.2,12.6 6.4,11.8 6,10.8 Z"/>
<path fill="#fff" d="M11.9,14.6 L15.6,15.0 L17.4,16.4 L16.4,18.7 L14.6,21.9 L13.1,19.9 L12.1,16.6 Z"/>
<path fill="#fff" d="M19.2,12.1 L20.7,10.1 L21.4,12.1 L21.9,13.6 L20.2,14.1 Z"/></svg>
<div class="t" style="left:2111.0px;top:829.82px;font-size:21px;line-height:21px;color:#151515;font-weight:400;letter-spacing:0px;">2 minutes</div>
<div class="t" style="left:2111.0px;top:861.62px;font-size:21px;line-height:21px;color:#151515;font-weight:400;letter-spacing:0px;">ago</div>
<div class="r" style="left:2273.4px;top:835.9px;width:6.4px;height:6.2px;background:#151515;border-radius:50%"></div>
<div class="r" style="left:2273.4px;top:843.2px;width:6.4px;height:6.2px;background:#151515;border-radius:50%"></div>
<div class="r" style="left:2273.4px;top:850.3px;width:6.4px;height:6.2px;background:#151515;border-radius:50%"></div>
<svg class="r" style="left:500px;top:915.5px" width="29" height="29" viewBox="0 0 29 29"><circle cx="14.5" cy="14.5" r="13.5" fill="#409393"/></svg>
<div class="t" style="left:507.6px;top:917.78px;font-size:22px;line-height:22px;color:#fff;font-weight:400;letter-spacing:0px;-webkit-text-stroke:0.35px #fff">P</div>
<div class="t" style="left:534.5px;top:918.52px;font-size:21px;line-height:21px;color:#1f5bc6;font-weight:400;letter-spacing:0.6px;text-decoration:underline;text-decoration-thickness:2px;text-underline-offset:2.1px;text-decoration-skip-ink:none">memory-hog-</div>
<div class="t" style="left:534.5px;top:950.32px;font-size:21px;line-height:21px;color:#1f5bc6;font-weight:400;letter-spacing:0.88px;text-decoration:underline;text-decoration-thickness:2px;text-underline-offset:2.1px;text-decoration-skip-ink:none">7fd88c4bd6-4tnl7</div>
<svg class="r" style="left:790.5px;top:917.7px" width="22" height="22" viewBox="0 0 22 22"><g fill="#151515">
<path d="M1.3,9.5 C2.2,4.6 6.2,1 11,1 C13.8,1 16.3,2.2 18,4.1 L21.3,2.4 L21.3,9.4 L13.8,9.4 L16.2,6.9 C14.9,5.3 13,4.2 11,4.2 C7.8,4.2 5.2,6.5 4.5,9.5 Z"/>
<path d="M20.7,12.7 C19.8,17.5 15.8,21.2 11,21.2 C8.3,21.2 5.7,20 4,18.1 L0.8,19.8 L0.8,12.7 L8.2,12.7 L5.9,15.3 C7.2,17 9,18 11,18 C14.2,18 16.8,15.8 17.5,12.7 Z"/>
</g></svg>
<div class="t" style="left:820.0px;top:918.52px;font-size:21px;line-height:21px;color:#151515;font-weight:400;letter-spacing:0px;">Running</div>
<div class="t" style="left:1092.3px;top:918.52px;font-size:21px;line-height:21px;color:#151515;font-weight:400;letter-spacing:0px;"><span style="letter-spacing:-2.4px">1</span>/<span style="margin-left:-1.2px;letter-spacing:-1.2px">1</span></div>
<div class="t" style="left:1250.0px;top:918.52px;font-size:21px;line-height:21px;color:#151515;font-weight:400;letter-spacing:0px;">0</div>
<div class="r" style="left:1406.0px;top:916.3px;width:38.0px;height:27.0px;background:#1c3d7a;border-radius:14px"></div>
<div class="t" style="left:1411.8px;top:918.32px;font-size:21px;line-height:21px;color:#fff;font-weight:400;letter-spacing:-1.1px;-webkit-text-stroke:0.3px #fff">RS</div>
<div class="t" style="left:1450.5px;top:918.52px;font-size:21px;line-height:21px;color:#1f5bc6;font-weight:400;letter-spacing:0.6px;text-decoration:underline;text-decoration-thickness:2px;text-underline-offset:2.1px;text-decoration-skip-ink:none">memory-hog-</div>
<div class="t" style="left:1450.5px;top:950.32px;font-size:21px;line-height:21px;color:#1f5bc6;font-weight:400;letter-spacing:0.8px;text-decoration:underline;text-decoration-thickness:2px;text-underline-offset:2.1px;text-decoration-skip-ink:none">7fd88c4bd6</div>
<div class="t" style="left:1707.0px;top:918.52px;font-size:21px;line-height:21px;color:#151515;font-weight:400;letter-spacing:-0.1px;"><span style="letter-spacing:-2.6px">1</span>5<span style="letter-spacing:-2.6px">1</span>.<span style="margin-left:-1.3px;letter-spacing:-1.3px">1</span> MiB</div>
<div class="t" style="left:1895.5px;top:918.52px;font-size:21px;line-height:21px;color:#151515;font-weight:400;letter-spacing:-0.3px;">0.014 cores</div>
<svg class="r" style="left:2080px;top:912.4px" width="28" height="28" viewBox="0 0 28 28"><circle cx="13.5" cy="13.4" r="10.1" fill="#151515"/>
<path fill="#fff" d="M6,10.8 C6.8,8.6 8.5,6.8 10.2,6.0 L11.2,6.9 L12.6,5.0 C13.3,5.0 14,5.4 14.2,5.9 L14.1,8.3 L12.3,10.2 L12.9,11.9 L11.1,12.3 L9.6,12.5 L9.8,13.3 L11.8,14.4 L11.2,14.8 L8.3,13.2 C7.2,12.6 6.4,11.8 6,10.8 Z"/>
<path fill="#fff" d="M11.9,14.6 L15.6,15.0 L17.4,16.4 L16.4,18.7 L14.6,21.9 L13.1,19.9 L12.1,16.6 Z"/>
<path fill="#fff" d="M19.2,12.1 L20.7,10.1 L21.4,12.1 L21.9,13.6 L20.2,14.1 Z"/></svg>
<div class="t" style="left:2111.0px;top:918.52px;font-size:21px;line-height:21px;color:#151515;font-weight:400;letter-spacing:0px;">3 minutes</div>
<div class="t" style="left:2111.0px;top:950.32px;font-size:21px;line-height:21px;color:#151515;font-weight:400;letter-spacing:0px;">ago</div>
<div class="r" style="left:2273.4px;top:924.6px;width:6.4px;height:6.2px;background:#151515;border-radius:50%"></div>
<div class="r" style="left:2273.4px;top:931.9px;width:6.4px;height:6.2px;background:#151515;border-radius:50%"></div>
<div class="r" style="left:2273.4px;top:939.0px;width:6.4px;height:6.2px;background:#151515;border-radius:50%"></div>
<div class="r" style="left:465.0px;top:547.0px;width:1875.0px;height:1.0px;background:#c8c8c8"></div>
<div class="r" style="left:465.0px;top:635.0px;width:1875.0px;height:1.0px;background:#c8c8c8"></div>
<div class="r" style="left:465.0px;top:724.0px;width:1875.0px;height:1.0px;background:#c8c8c8"></div>
<div class="r" style="left:465.0px;top:812.0px;width:1875.0px;height:1.0px;background:#c8c8c8"></div>
<div class="r" style="left:465.0px;top:901.0px;width:1875.0px;height:1.0px;background:#c8c8c8"></div>
<div class="r" style="left:465.0px;top:989.0px;width:1875.0px;height:1.0px;background:#c8c8c8"></div>
</div></body></html>
